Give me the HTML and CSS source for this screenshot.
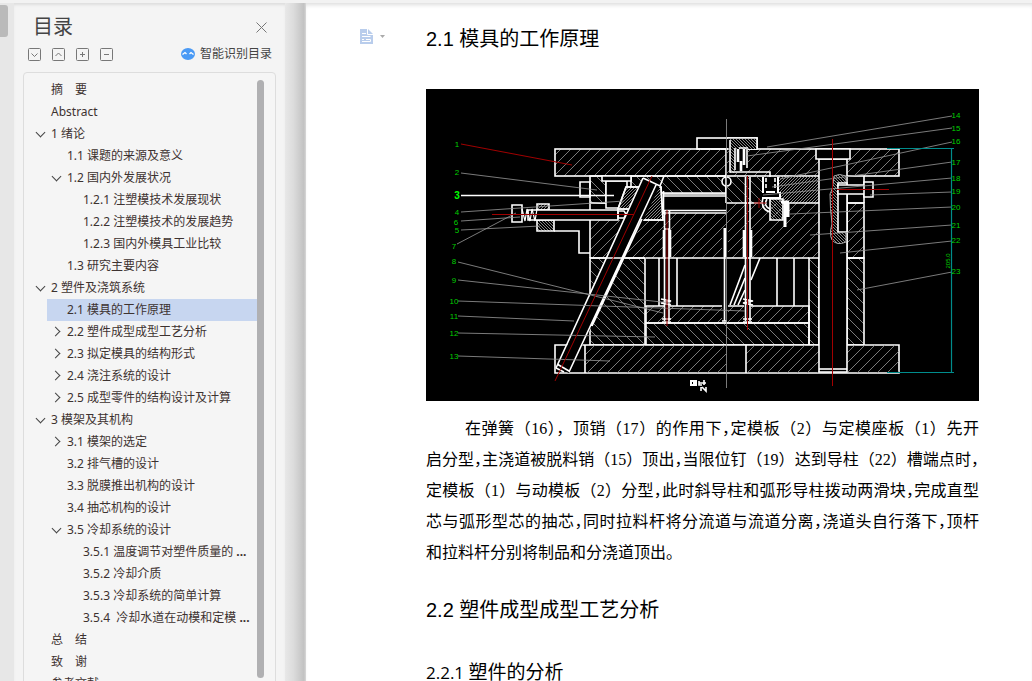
FILE: index.html
```html
<!DOCTYPE html>
<html lang="zh-CN">
<head>
<meta charset="utf-8">
<title>目录</title>
<link rel="stylesheet" href="styles.css">
</head>
<body>
<div class="topbar"></div>
<div class="app">
  <div class="rail"><div class="rail-thumb"></div></div>
  <aside class="panel">
    <header class="panel-head">
      <h1 class="panel-title">目录</h1>
      <button class="icon-btn" aria-label="关闭"><svg width="11" height="11" viewBox="0 0 11 11"><path d="M.5 .5l10 10M10.500 .5l-10 10" stroke="#777" fill="none"/></svg></button>
    </header>
    <div class="tools">
      <button class="icon-btn" aria-label="展开"><svg width="13" height="13" viewBox="0 0 13 13"><rect x=".5" y=".5" width="12" height="12" rx="1"/><path d="M3.500 5.500l3 3 3-3"/></svg></button>
      <button class="icon-btn" aria-label="收起"><svg width="13" height="13" viewBox="0 0 13 13"><rect x=".5" y=".5" width="12" height="12" rx="1"/><path d="M3.500 8l3-3 3 3"/></svg></button>
      <button class="icon-btn" aria-label="增加"><svg width="13" height="13" viewBox="0 0 13 13"><rect x=".5" y=".5" width="12" height="12" rx="1"/><path d="M4 6.500h5M6.500 4v5"/></svg></button>
      <button class="icon-btn" aria-label="减少"><svg width="13" height="13" viewBox="0 0 13 13"><rect x=".5" y=".5" width="12" height="12" rx="1"/><path d="M4 6.500h5"/></svg></button>
      <button class="smart"><svg width="14" height="12" viewBox="0 0 14 12"><ellipse cx="7" cy="6" rx="7" ry="6" fill="#4a9af5"/><path d="M1.500 6.500l2.500-2 1.500 1.500M12.500 6.500L10 4.500 8.500 6" stroke="#fff" stroke-width="1.300" fill="none"/></svg>智能识别目录</button>
    </div>
    <nav class="outline" aria-label="目录">
      <ul class="tree">
        <li class="row l1"><a href="#">摘　要</a></li>
        <li class="row l1"><a href="#">Abstract</a></li>
        <li class="row l1"><button class="tog open" aria-label="收起"></button><a href="#">1 绪论</a></li>
        <li class="row l2"><a href="#">1.1 课题的来源及意义</a></li>
        <li class="row l2"><button class="tog open" aria-label="收起"></button><a href="#">1.2 国内外发展状况</a></li>
        <li class="row l3"><a href="#">1.2.1 注塑模技术发展现状</a></li>
        <li class="row l3"><a href="#">1.2.2 注塑模技术的发展趋势</a></li>
        <li class="row l3"><a href="#">1.2.3 国内外模具工业比较</a></li>
        <li class="row l2"><a href="#">1.3 研究主要内容</a></li>
        <li class="row l1"><button class="tog open" aria-label="收起"></button><a href="#">2 塑件及浇筑系统</a></li>
        <li class="row l2 current"><a href="#">2.1 模具的工作原理</a></li>
        <li class="row l2"><button class="tog" aria-label="展开"></button><a href="#">2.2 塑件成型成型工艺分析</a></li>
        <li class="row l2"><button class="tog" aria-label="展开"></button><a href="#">2.3 拟定模具的结构形式</a></li>
        <li class="row l2"><button class="tog" aria-label="展开"></button><a href="#">2.4 浇注系统的设计</a></li>
        <li class="row l2"><button class="tog" aria-label="展开"></button><a href="#">2.5 成型零件的结构设计及计算</a></li>
        <li class="row l1"><button class="tog open" aria-label="收起"></button><a href="#">3 模架及其机构</a></li>
        <li class="row l2"><button class="tog" aria-label="展开"></button><a href="#">3.1 模架的选定</a></li>
        <li class="row l2"><a href="#">3.2 排气槽的设计</a></li>
        <li class="row l2"><a href="#">3.3 脱膜推出机构的设计</a></li>
        <li class="row l2"><a href="#">3.4 抽芯机构的设计</a></li>
        <li class="row l2"><button class="tog open" aria-label="收起"></button><a href="#">3.5 冷却系统的设计</a></li>
        <li class="row l3"><a href="#">3.5.1 温度调节对塑件质量的 <b>...</b></a></li>
        <li class="row l3"><a href="#">3.5.2 冷却介质</a></li>
        <li class="row l3"><a href="#">3.5.3 冷却系统的简单计算</a></li>
        <li class="row l3"><a href="#">3.5.4&nbsp; 冷却水道在动模和定模 <b>...</b></a></li>
        <li class="row l1"><a href="#">总　结</a></li>
        <li class="row l1"><a href="#">致　谢</a></li>
        <li class="row l1"><a href="#">参考文献</a></li>
      </ul>
      <div class="scroll-thumb"></div>
    </nav>
  </aside>
  <div class="edge"></div>
  <main class="page">
    <button class="icon-btn para-tool" aria-label="段落选项"><svg width="27" height="16" viewBox="0 0 27 16"><path d="M1 0h8l5 5v10H1z" fill="#b9cdec"/><path d="M8.500 0v5.500H14" stroke="#fff" fill="none"/><path d="M3 4.500h4M3 7.500h8.500M3 10.500h2M7 10.500h4.500v2H3" stroke="#fff" fill="none"/><path d="M21 6h5l-2.500 3z" fill="#aaa"/></svg></button>
    <article class="doc">
      <h2 class="h-sec">2.1 模具的工作原理</h2>
      <svg class="figure" viewBox="426 89 553 312" role="img" aria-label="模具装配图">
        <defs>
          <pattern id="f" width="10" height="10" patternUnits="userSpaceOnUse"><path d="M-1 11L11-1M-1 1L1-1M9 11l2-2" stroke="#999" stroke-width=".8"/></pattern>
          <pattern id="b" width="10" height="10" patternUnits="userSpaceOnUse"><path d="M-1-1L11 11M9-1l2 2M-1 9l2 2" stroke="#999" stroke-width=".8"/></pattern>
          <pattern id="df" width="3" height="3" patternUnits="userSpaceOnUse"><path d="M-1 4L4-1M-1 1L1-1M2 4l2-2" stroke="#aaa" stroke-width=".8"/></pattern>
          <pattern id="db" width="3" height="3" patternUnits="userSpaceOnUse"><path d="M-1-1L4 4M2-1l2 2M-1 2l2 2" stroke="#aaa" stroke-width=".8"/></pattern>
        </defs>
        <path fill="#000" d="M426 89h553v312H426z"/>
        <g class="cad">
          <rect x="697" y="138" width="60" height="11" fill="#000"/>
          <rect x="555" y="149" width="344" height="27" fill="url(#f)"/>
          <path d="M590 176h16v27h-16zM631 176h95v17h-95z" fill="url(#b)"/>
          <path d="M726 176h49v27h-49z" fill="url(#b)" stroke="none"/>
          <path d="M779 176h40v27h-40z" fill="url(#df)" stroke="none"/>
          <path d="M590 220h73v-7h63v-10h93v55H590z" fill="url(#f)" stroke="none"/>
          <path d="M590 203v55"/>
          <path d="M847 203h17v55h-17z" fill="url(#f)"/>
          <path d="M590 258h55v87h-55zM809 258h10v87h-10zM847 258h17v87h-17z" fill="url(#b)"/>
          <path d="M646 306h163v17H646z" fill="url(#f)"/>
          <path d="M646 323h163v22H646z" fill="url(#b)"/>
          <path d="M555 345h344v28H555z" fill="#000"/>
          <path d="M585 345h141v28H585zM746 345h73v28h-73zM847 345h52v28h-52z" fill="url(#f)" stroke="none"/>
          <path d="M585 345v28M746 345v28M864 176v27M659 258v48M677 258v48M777 258v48M794 258v48"/>
          <!-- sprue bush -->
          <path d="M728 138h29v11h-9v24h-18z" fill="#000" stroke="none"/>
          <path d="M730 139h27v10h-27zM730 149h5v24h-5z" fill="url(#db)" stroke="none"/>
          <path d="M727 138h30v11M730 140v32h40v5M735 148v22M747 149v19M739 148h9" />
          <path d="M738 149v13M744 149v16M741 161v10" stroke-width="2.600"/>
          <circle cx="726.500" cy="181.500" r="4.500" fill="#000"/>
          <!-- left slider -->
          <path d="M606 181h21v27h-21z" fill="#000"/>
          <path d="M602 176h29v5h-29z" fill="#000"/>
          <path d="M580 182h10v15h-10zM590 203h16"/>
          <path d="M626 187h35l2 33h-23l-12-11h-10z" fill="#000"/>
          <path d="M626 187h35l2 33h-23l-12-11h-10z" fill="url(#df)"/>
          <path d="M664 194h62M664 196h62M664 210.500h62M664 213h62M663.500 191v23"/>
          <path d="M537 204h12v6h-12z" fill="url(#df)"/>
          <path d="M537 220h17v11h-17z" fill="url(#db)"/>
          <path d="M554 231h25v22h11"/>
          <path d="M528 210h90v10h-90z" fill="#000"/>
          <path d="M512 205h10v17h-10zM618 211h6l2 3-2 4h-6z"/>
          <path d="M522 209l3 12 2-12 3 12 2-12 3 12 2-12" stroke-width="1.200"/>
          <path d="M461 195.500h153"/>
          <!-- inclined guide pin -->
          <path d="M643 178l17 8L569 373l-12-5z" fill="#000" stroke="none"/>
          <path d="M643 178L556 368M656 185L569 372M643 178l17 8 4-10M642 219l-50 107M557 364l12 7M556 368l8 4"/>
          <!-- ejector pins -->
          <path d="M664 228h6v93h-6zM722 228h6v93h-6zM744 228h7v93h-7z" fill="#000" stroke="none"/>
          <path d="M664.500 211v18h5v-18M664.500 229v92M669 229v92M724.500 228v93M745.500 177v144M750 177v144"/>
          <path d="M664 230v27M670 230v27M725 228v29M744 230v27M751 230v27" stroke-width="2.600"/>
          <path d="M662 322h9M661 299l10 2-10 2 10 2M743 299l10 2-10 2 10 2M722 321h5M743 322h9M662 319h9M743 319h9"/>
          <path d="M745 265l-15 40M760 258l-9 22M745 278l-11 27M745 290l-7 15"/>
          <!-- latch and lock -->
          <path d="M762 177h17v20h-17z" fill="#000" stroke="none"/>
          <path d="M763 177v16M778 177v16M766 192h9M762 198h18v-6" stroke-width="2"/>
          <path d="M766 178v12M775 178v12" stroke-dasharray="4 2"/>
          <path d="M763 198q-3 11 7 14M767 199q-4 7 3 10"/>
          <path d="M770 199h13v21h-13z" fill="url(#db)"/>
          <path d="M781 202h8M785 201v26M788 203v14" stroke-width="3"/>
          <path d="M726 203h36M783 203h36M590 258h55M646 258h163M847 203h17M847 258h17M726 149v54"/>
          <!-- guide pillar -->
          <path d="M819 159h28v213h-28z" fill="#000"/>
          <path d="M816 149h34v10h-34z" fill="#000"/>
          <path d="M819 369h28"/>
          <path d="M834 176q5-3 12 0v66q-9 4-14-2-3-6 0-16-2-16-2-30 3-5 3-10z" fill="url(#db)" stroke="#aaa" stroke-width="1"/>
          <path d="M838 183h9v49h-9z" fill="#000"/>
          <path d="M838 185h26v9h-26zM864 182h9v15h-9z" fill="#000"/>
          <path d="M691 381h5v4h-5zM694 381v5" stroke-width="2"/>
          <path d="M699 381v4h3M704 380v5M699 383h7M701 387v4M702 387l4 4v-4"/>
        </g>
        <g class="leader">
          <path d="M461 173L597 190M461 212L624 201M461 221l59-4M461 230l79-4M457 244l59-31M458 262L663 313M458 280L671 303M458 301L745 311M458 316l116 5M458 333l197 4M458 356l152 5"/>
          <path d="M952 116L767 147M952 128L747 156M952 142L780 179M952 162L772 187M952 178L763 195M952 192l-82 3M952 207L790 214M952 225L810 235M952 241L840 253M952 272L857 290M726.500 119v269"/>
        </g>
        <path class="red" d="M461 144l111 21M492 214.500h142M652 176L555 381M667 210v116M747.500 176v154M832.500 139v247M837 189.500h52M754 203h12M759 198v10"/>
        <path class="cyan" d="M887 148.500h67M887 372.500h67M951.500 149v223"/>
        <g class="num">
          <text x="457" y="147">1</text><text x="457" y="175">2</text><text x="457" y="199" class="hot">3</text><text x="457" y="215">4</text><text x="456" y="225">6</text><text x="457" y="233">5</text><text x="454" y="249">7</text><text x="454" y="264">8</text><text x="454" y="283">9</text><text x="454" y="304">10</text><text x="454" y="319">11</text><text x="454" y="336">12</text><text x="454" y="359">13</text>
          <text x="956" y="118">14</text><text x="956" y="131">15</text><text x="956" y="144">16</text><text x="956" y="165">17</text><text x="956" y="181">18</text><text x="956" y="194">19</text><text x="956" y="210">20</text><text x="956" y="228">21</text><text x="956" y="243">22</text><text x="956" y="274">23</text>
          <text transform="translate(950 261) rotate(-90)" class="dim">205.0</text>
        </g>
      </svg>
      <p class="body"><span class="line first">在弹簧（16），顶销（17）的作用下<i>，</i>定模板（2）与定模座板（1）先开</span><span class="line">启分型<i>，</i>主浇道被脱料销（15）顶出<i>，</i>当限位钉（19）达到导柱（22）槽端点时<i>，</i></span><span class="line">定模板（1）与动模板（2）分型<i>，</i>此时斜导柱和弧形导柱拨动两滑块<i>，</i>完成直型</span><span class="line">芯与弧形型芯的抽芯<i>，</i>同时拉料杆将分流道与流道分离<i>，</i>浇道头自行落下<i>，</i>顶杆</span><span class="line last">和拉料杆分别将制品和分浇道顶出。</span></p>
      <h2 class="h-sec next">2.2 塑件成型成型工艺分析</h2>
      <h3 class="h-sub"><span class="h-num">2.2.1 </span>塑件的分析</h3>
    </article>
  </main>
</div>
</body>
</html>
```

FILE: styles.css
```css
* { box-sizing: border-box; }
body {
  margin: 0;
  height: 100vh;
  overflow: hidden;
  display: flex;
  flex-direction: column;
  background: #fff;
  font-family: "Noto Sans", "Noto Sans CJK SC", sans-serif;
}
button { border: 0; padding: 0; background: none; font: inherit; color: inherit; }
.topbar { flex: none; height: 3px; background: #f2f2f2; }
.app {
  flex: 1;
  min-height: 0;
  display: grid;
  grid-template-columns: 14px 271px 21px 1fr;
}
.rail { background: #e7e7e7; padding-top: 2px; }
.rail-thumb { width: 8px; height: 32px; background: #bababa; border-radius: 0 3px 3px 0; }
.panel {
  min-height: 0;
  display: flex;
  flex-direction: column;
  padding: 0 9px;
  background: #f4f4f4;
  box-shadow: inset 0 3px 3px -1px #ddd;
}
.edge { background: linear-gradient(90deg, #e8e8e8, #dcdcdc 40%, #c2c2c2 90%, #d8d8d8); }
.icon-btn { display: flex; }
.icon-btn svg { display: block; }
.panel-head {
  flex: none;
  display: flex;
  align-items: center;
  justify-content: space-between;
  height: 42px;
  padding: 6px 9px 0 10px;
}
.panel-title { margin: 0; font-size: 20px; line-height: 28px; font-weight: 400; color: #444; }
.tools { flex: none; display: flex; align-items: center; gap: 11px; height: 18px; padding: 0 4px 0 5px; }
.tools .icon-btn svg { fill: none; stroke: #777; }
.smart {
  display: flex;
  align-items: center;
  gap: 5px;
  margin-left: auto;
  font-size: 12px;
  line-height: 18px;
  color: #444;
}
.outline {
  flex: none;
  display: flex;
  margin-top: 9px;
  padding: 6px 11px 0 0;
  border: 1px solid #ddd;
  border-radius: 4px;
  background: #f5f5f5;
}
.tree { flex: 1; margin: 0; padding: 0 0 0 23px; list-style: none; }
.row {
  display: flex;
  align-items: center;
  height: 22px;
  font-size: 12px;
  line-height: 22px;
  color: #3d3230;
  white-space: nowrap;
}
.row a { color: inherit; text-decoration: none; }
.l1 { padding-left: 4px; }
.l2 { padding-left: 20px; }
.l3 { padding-left: 36px; }
.current { background: #c7d6f0; }
.tog { width: 16px; height: 16px; margin-left: -16px; display: flex; align-items: center; justify-content: center; }
.tog::before {
  content: "";
  width: 6px;
  height: 6px;
  margin: 0 8px 2px 0;
  border: solid #444;
  border-width: 1px 1px 0 0;
  transform: rotate(45deg);
}
.tog.open::before { margin: 0 5px 3px 0; transform: rotate(135deg); }
.scroll-thumb { width: 7px; height: 598px; margin-top: 1px; border-radius: 4px; background: #b0b0b2; }
.page {
  min-width: 0;
  display: flex;
  align-items: flex-start;
  gap: 40px;
  padding: 21px 53px 0;
  background: #fff;
  box-shadow: inset 0 4px 4px -2px #ddd;
}
.para-tool { flex: none; padding-top: 5px; }
.doc { flex: 1; min-width: 0; color: #000; }
.h-sec { margin: 0; font: 400 20px/30px "Liberation Sans", "Noto Sans CJK SC", sans-serif; }
.h-sec.next { margin-top: 27px; }
.h-sub { margin: 32px 0 0; font: 400 19px/28px "Noto Sans CJK SC", sans-serif; }
.h-num { font: 400 17px/28px "Open Sans", sans-serif; white-space: pre; }
.figure { display: block; width: 100%; margin-top: 35px; }
.body { margin: 12px 0 0; font: 16px/31px "Liberation Serif", "Noto Sans CJK SC", serif; }
.line { display: block; white-space: nowrap; text-align-last: justify; }
.line i { font-style: normal; font-feature-settings: "halt"; }
.line.first { padding-left: 39px; }
.line.last { text-align-last: left; }
.cad { fill: none; stroke: #fff; stroke-width: 1.6; }
.leader { fill: none; stroke: #999; stroke-width: .8; }
.red { fill: none; stroke: #a00000; stroke-width: 1; }
.cyan { fill: none; stroke: #008c8c; stroke-width: 1.2; }
.num { font: 8px "Liberation Sans", sans-serif; fill: #00d000; text-anchor: middle; }
.num .hot { fill: #0f0; font-weight: 700; font-size: 10px; }
.num .dim { font-size: 6px; }
```
